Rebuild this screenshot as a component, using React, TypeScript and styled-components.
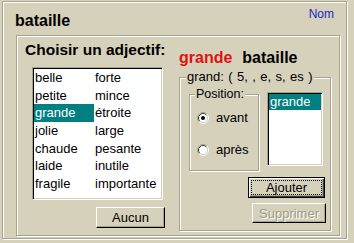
import React from 'react';
import styled, { createGlobalStyle } from 'styled-components';

// Couleurs du thème classique
const face = '#d5d1bb';
const shadow = '#a7a38c';
const highlight = '#ffffff';
const dark = '#404040';
const teal = '#008080';
const font = '"Liberation Sans", Arial, sans-serif';

const GlobalStyle = createGlobalStyle`
  html, body {
    margin: 0;
    padding: 0;
    background: ${face};
  }
  body {
    font-family: ${font};
  }
`;

const Window = styled.div`
  width: 354px;
  height: 243px;
  box-sizing: border-box;
  padding: 1px 0 0 2px;
  background: ${face};
  overflow: hidden;
`;

const Frame = styled.div`
  width: 345px;
  height: 238px;
  box-sizing: border-box;
  border: 1px solid ${shadow};
  box-shadow: inset 1px 1px 0 ${highlight}, 1px 1px 0 ${highlight};
  display: flex;
  flex-direction: column;
`;

const Header = styled.div`
  height: 33px;
  display: flex;
  justify-content: space-between;
  align-items: flex-start;
  padding: 0 12px;
`;

const Title = styled.div`
  margin-top: 10px;
  font-size: 16px;
  font-weight: bold;
  line-height: 18px;
  color: #000;
`;

const NameLink = styled.div`
  margin-top: 5px;
  font-size: 12px;
  line-height: 14px;
  color: #2424c8;
`;

const Panel = styled.div`
  margin-left: 13px;
  width: 324px;
  height: 201px;
  box-sizing: border-box;
  border: 1px solid ${shadow};
  box-shadow: inset 1px 1px 0 ${highlight}, 1px 1px 0 ${highlight};
  display: flex;
  gap: 14px;
  padding: 5px 0 0 8px;
`;

const LeftColumn = styled.div`
  width: 140px;
  display: flex;
  flex-direction: column;
`;

const Heading = styled.div<{ $size?: number }>`
  font-size: ${({ $size }) => $size ?? 16}px;
  font-weight: bold;
  line-height: 18px;
  color: #000;
  white-space: nowrap;
`;

const ListBox = styled.div<{ $width: number; $height: number }>`
  width: ${({ $width }) => $width}px;
  height: ${({ $height }) => $height}px;
  box-sizing: border-box;
  background: #fff;
  border: 1px solid;
  border-color: ${shadow} ${highlight} ${highlight} ${shadow};
  box-shadow: inset 1px 1px 0 #000, inset -1px -1px 0 ${face};
  padding: 1px 1px 0 1px;
  overflow: hidden;
`;

const AdjectiveList = styled(ListBox)`
  margin: 8px 0 0 7px;
  display: grid;
  grid-auto-flow: column;
  grid-template-rows: repeat(7, 17.67px);
  grid-template-columns: 60px 61px;
  align-content: start;
`;

const ListItem = styled.div<{ $selected?: boolean; $lineHeight: number }>`
  padding-left: 1px;
  font-size: 13px;
  line-height: ${({ $lineHeight }) => $lineHeight}px;
  white-space: nowrap;
  color: ${({ $selected }) => ($selected ? '#fff' : '#000')};
  background: ${({ $selected }) => ($selected ? teal : 'transparent')};
`;

const Button = styled.button<{ $width: number; $height: number }>`
  position: relative;
  box-sizing: border-box;
  width: ${({ $width }) => $width}px;
  height: ${({ $height }) => $height}px;
  margin: 0;
  padding: 0;
  font-family: ${font};
  font-size: 13px;
  color: #000;
  background: ${face};
  border: 1px solid;
  border-color: ${highlight} #000 #000 ${highlight};
  box-shadow: inset -1px -1px 0 ${shadow};

  &:disabled {
    color: #9f9b85;
    text-shadow: 1px 1px 0 ${highlight};
  }
`;

const DefaultButton = styled(Button)`
  border: 1px solid #000;
  box-shadow: inset 1px 1px 0 ${highlight}, inset -1px -1px 0 ${dark}, inset -2px -2px 0 ${shadow};

  &::after {
    content: '';
    position: absolute;
    inset: 2px;
    border: 1px dotted #000;
  }
`;

const ClearButton = styled(Button)`
  margin-top: 7px;
  align-self: flex-end;
`;

const RightColumn = styled.div`
  width: 152px;
  display: flex;
  flex-direction: column;
`;

const RightHeading = styled(Heading)`
  margin-top: 8px;
`;

const Accent = styled.span`
  color: #e21212;
  margin-right: 10px;
`;

const GroupBox = styled.fieldset<{ $width: number; $height: number }>`
  box-sizing: border-box;
  width: ${({ $width }) => $width}px;
  height: ${({ $height }) => $height}px;
  min-width: 0;
  margin: 0;
  border: 1px solid ${shadow};
  box-shadow: inset 1px 1px 0 ${highlight}, 1px 1px 0 ${highlight};
`;

const GroupLegend = styled.legend<{ $size?: number }>`
  padding: 0 1px;
  font-size: ${({ $size }) => $size ?? 13}px;
  line-height: 14px;
  word-spacing: 0.8px;
  background: ${face};
  color: #000;
  white-space: nowrap;
`;

const FormGroup = styled(GroupBox)`
  margin-top: 3px;
  padding: 0 4px 0 6px;
  display: flex;
  flex-direction: column;
`;

const OptionsRow = styled.div`
  display: flex;
  align-items: flex-start;
`;

const PositionGroup = styled(GroupBox)`
  margin: 3px 0 0 3px;
  padding: 0 0 0 5px;
`;

const RadioList = styled.div`
  margin: 7px 0 0 2px;
  display: flex;
  flex-direction: column;
  gap: 12px;
`;

const RadioRow = styled.label`
  height: 20px;
  display: flex;
  align-items: center;
  gap: 7px;
  font-size: 13px;
  line-height: 20px;
  color: #000;
`;

const FormList = styled(ListBox)`
  margin: 8px 0 0 8px;
`;

const ButtonColumn = styled.div`
  margin-top: 6px;
  display: flex;
  flex-direction: column;
  align-items: flex-end;
  gap: 5px;
`;

const AddButton = styled(DefaultButton)`
  margin-right: 1px;
`;

const RadioMark: React.FC<{ checked?: boolean }> = ({ checked }) => (
  <svg width="12" height="12" viewBox="0 0 12 12">
    <circle cx="6" cy="6" r="4.5" fill="#fff" />
    <path d="M2.11 9.89 A5.5 5.5 0 0 1 9.89 2.11" fill="none" stroke={shadow} strokeWidth="1" />
    <path d="M9.89 2.11 A5.5 5.5 0 0 1 2.11 9.89" fill="none" stroke={highlight} strokeWidth="1" />
    <path d="M2.82 9.18 A4.5 4.5 0 0 1 9.18 2.82" fill="none" stroke={dark} strokeWidth="1" />
    <path d="M9.18 2.82 A4.5 4.5 0 0 1 2.82 9.18" fill="none" stroke={face} strokeWidth="1" />
    {checked && <circle cx="6" cy="6" r="2" fill="#000" />}
  </svg>
);

const adjectives = [
  'belle', 'petite', 'grande', 'jolie', 'chaude', 'laide', 'fragile',
  'forte', 'mince', 'étroite', 'large', 'pesante', 'inutile', 'importante',
];

const App: React.FC = () => (
  <>
    <GlobalStyle />
    <Window>
      <Frame>
        <Header>
          <Title>bataille</Title>
          <NameLink>Nom</NameLink>
        </Header>
        <Panel>
          <LeftColumn>
            <Heading $size={15.5}>Choisir un adjectif:</Heading>
            <AdjectiveList $width={131} $height={133}>
              {adjectives.map((adj) => (
                <ListItem key={adj} $lineHeight={17.67} $selected={adj === 'grande'}>
                  {adj}
                </ListItem>
              ))}
            </AdjectiveList>
            <ClearButton $width={69} $height={21}>Aucun</ClearButton>
          </LeftColumn>
          <RightColumn>
            <RightHeading>
              <Accent>grande</Accent>bataille
            </RightHeading>
            <FormGroup $width={152} $height={161}>
              <GroupLegend>grand: ( 5, , e, s, es )</GroupLegend>
              <OptionsRow>
                <PositionGroup $width={70} $height={84}>
                  <GroupLegend $size={12.5}>Position:</GroupLegend>
                  <RadioList>
                    <RadioRow>
                      <RadioMark checked />
                      avant
                    </RadioRow>
                    <RadioRow>
                      <RadioMark />
                      après
                    </RadioRow>
                  </RadioList>
                </PositionGroup>
                <FormList $width={56} $height={74}>
                  <ListItem $lineHeight={16} $selected>grande</ListItem>
                </FormList>
              </OptionsRow>
              <ButtonColumn>
                <AddButton $width={77} $height={21}>Ajouter</AddButton>
                <Button $width={74} $height={20} disabled>Supprimer</Button>
              </ButtonColumn>
            </FormGroup>
          </RightColumn>
        </Panel>
      </Frame>
    </Window>
  </>
);

export default App;
